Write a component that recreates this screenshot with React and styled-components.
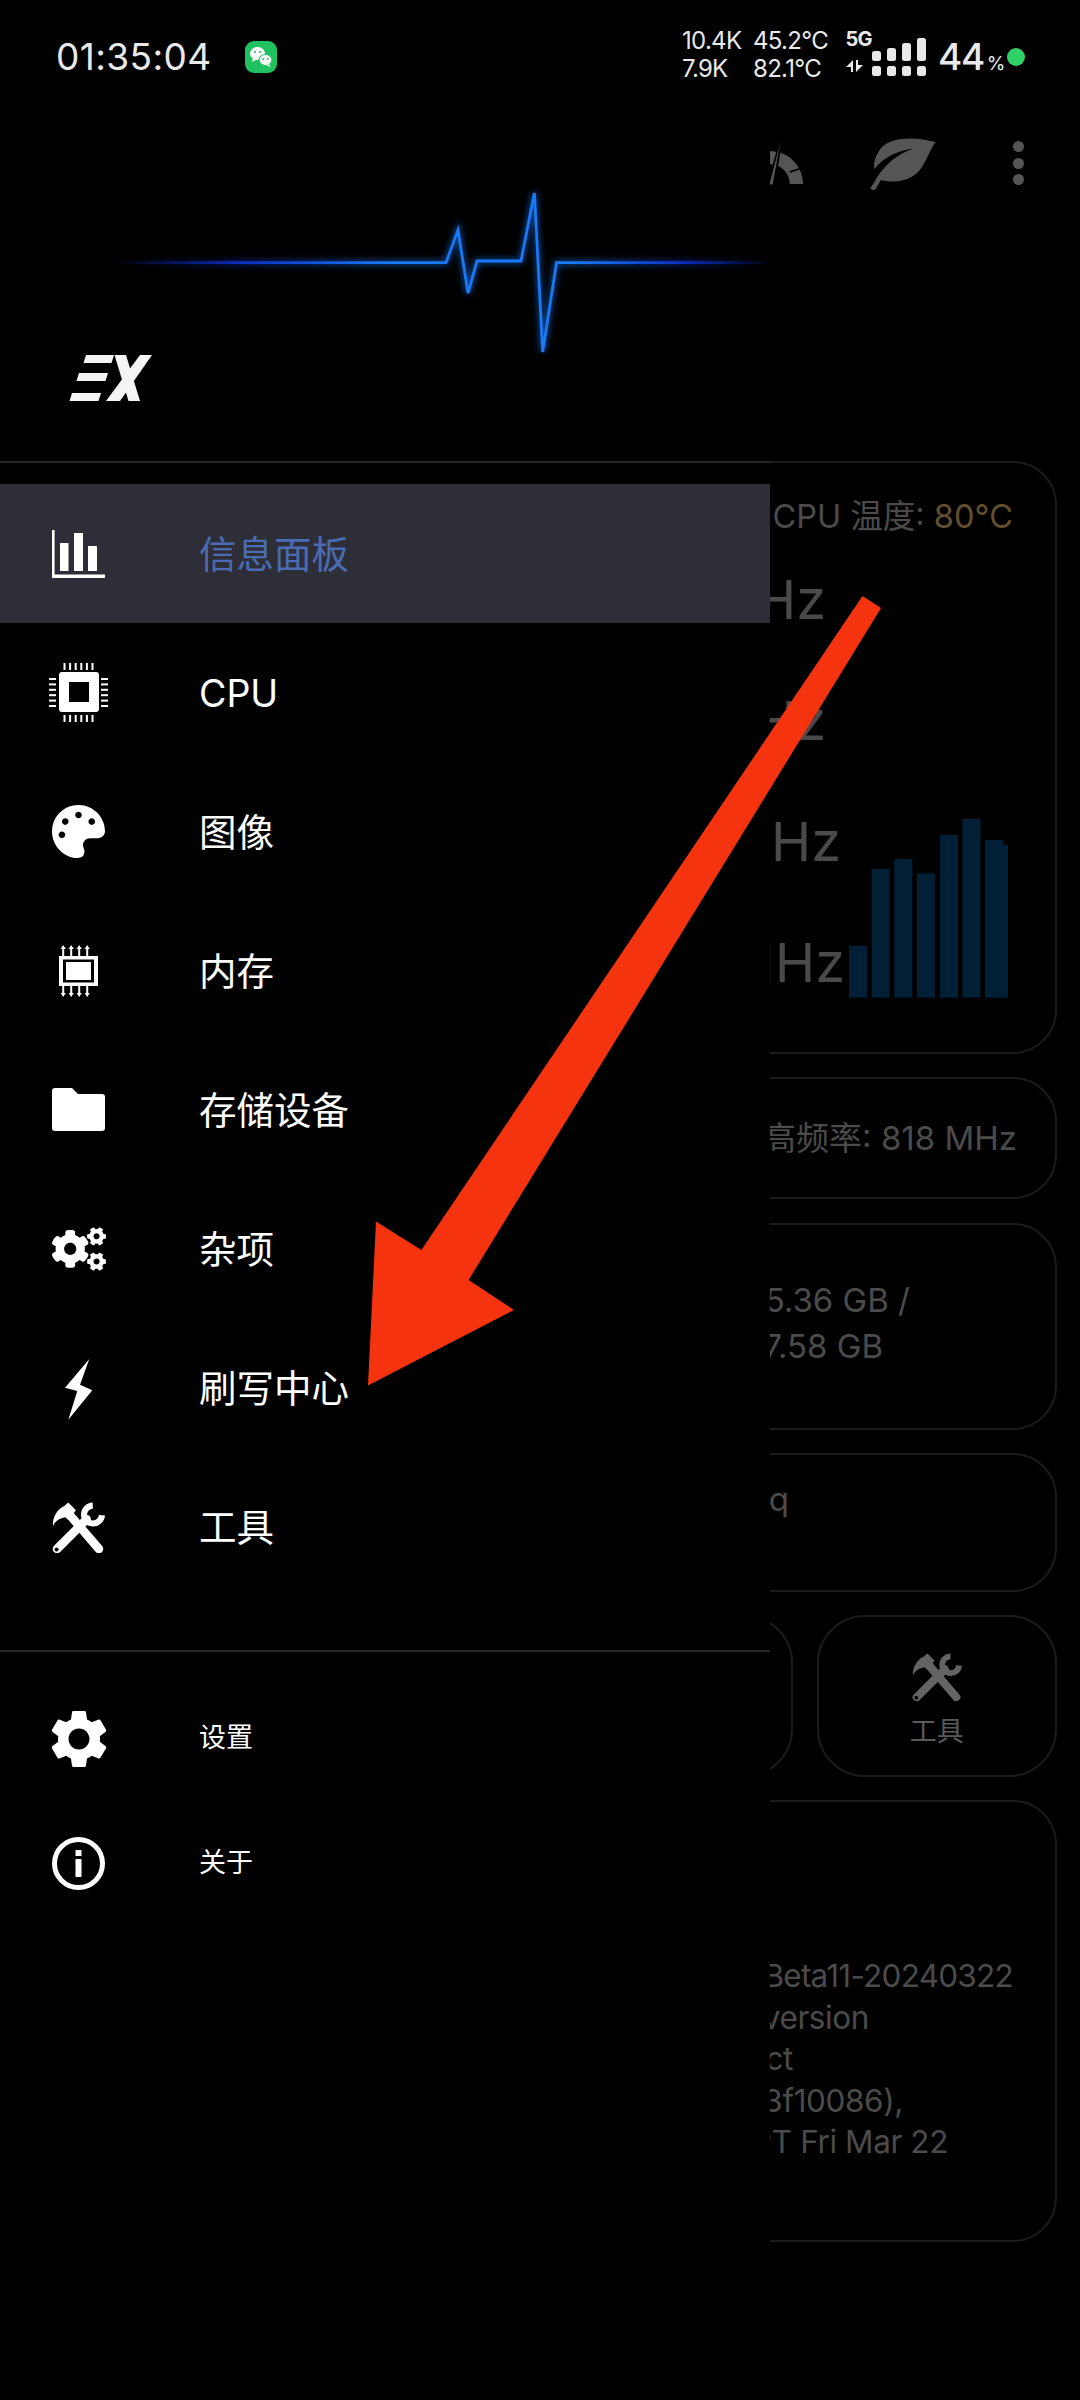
import React from "react";
import styled, { createGlobalStyle } from "styled-components";
import { FaPalette, FaCogs } from "react-icons/fa";

const Global = createGlobalStyle`
  html, body { margin: 0; padding: 0; background: #000; }
  #root { width: 1080px; height: 2400px; }
  * { box-sizing: border-box; }
`;

const FONT = `Inter, "Noto Sans CJK SC", sans-serif`;

const Screen = styled.div`
  position: relative;
  width: 1080px;
  height: 2400px;
  background: #000;
  overflow: hidden;
  font-family: ${FONT};
`;

/* ---------- status bar ---------- */
const StatusBar = styled.header`
  position: relative;
  z-index: 3;
  height: 114px;
  display: flex;
  align-items: flex-start;
  padding: 0 55px 0 56px;
  color: #e9e9e9;
`;
const Clock = styled.div`
  font-size: 37px;
  line-height: 44px;
  margin-top: 35px;
  letter-spacing: 0.4px;
  width: 189px;
`;
const AppBadge = styled.svg`
  width: 32px;
  height: 32px;
  margin-top: 41px;
  flex: none;
`;
const NetColumn = styled.div`
  width: ${(p) => p.$w}px;
  flex: none;
  margin-top: 27px;
  font-size: 24px;
  line-height: 27.5px;
  letter-spacing: -0.7px;
  white-space: nowrap;
  margin-left: ${(p) => p.$ml || 0}px;
`;
const RadioColumn = styled.div`
  width: 26px;
  flex: none;
  margin-top: 28px;
  display: flex;
  flex-direction: column;
  align-items: flex-end;
`;
const FiveG = styled.div`
  font-size: 20px;
  line-height: 22px;
  font-weight: 700;
  letter-spacing: -0.6px;
`;
const ActivityArrows = styled.svg`
  width: 17px;
  height: 12px;
  margin-top: 10px;
  margin-right: 9px;
`;
const SignalIcon = styled.svg`
  width: 54px;
  height: 40px;
  margin-top: 38px;
  flex: none;
`;
const Battery = styled.div`
  margin-left: 12px;
  margin-top: 34px;
  width: 69px;
  font-size: 37px;
  line-height: 46px;
  font-weight: 500;
  letter-spacing: -1.4px;
  white-space: nowrap;
`;
const Percent = styled.span`
  font-size: 19px;
  font-weight: 400;
  letter-spacing: 0;
  margin-left: 3px;
`;
const GreenDot = styled.span`
  width: 18px;
  height: 18px;
  border-radius: 50%;
  background: #2fd166;
  margin-top: 48px;
  flex: none;
`;

/* ---------- dimmed page behind the drawer ---------- */
const Page = styled.main`
  display: flex;
  flex-direction: column;
  color: #4b4b4b;
`;
const Toolbar = styled.div`
  height: 347px;
  display: flex;
  align-items: flex-start;
  padding: 23px 50px 0 737px;
`;
const Cards = styled.div`
  padding: 0 23px;
  display: flex;
  flex-direction: column;
  gap: 23.3px;
`;
const Card = styled.section`
  height: ${(p) => p.$h}px;
  border: 2px solid #1c1c1c;
  border-radius: 44px;
  padding-top: ${(p) => p.$pt || 0}px;
  padding-right: 38px;
`;
const Line = styled.div`
  font-size: ${(p) => p.$size || 33}px;
  line-height: ${(p) => p.$lh || 44}px;
  letter-spacing: ${(p) => p.$track || 0}px;
  text-align: right;
  white-space: nowrap;
  padding-right: ${(p) => p.$end}px;
`;
const CpuHead = styled.div`
  height: 75.5px;
  padding-top: 24px;
  font-size: 32.5px;
  line-height: 60px;
  text-align: right;
  white-space: nowrap;
  padding-right: 4px;
  color: #4b4b4b;
`;
const Warm = styled.span`
  color: #63502f;
`;
const CpuBody = styled.div`
  display: flex;
  align-items: flex-end;
  gap: 4px;
`;
const FreqColumn = styled.div`
  width: 820px;
  flex: none;
`;
const Freq = styled.div`
  height: 121px;
  font-size: 54px;
  line-height: 121px;
  text-align: right;
  white-space: nowrap;
  padding-right: ${(p) => p.$end}px;
  color: #4a4a4a;
`;
const LoadChart = styled.svg`
  width: 159px;
  height: 180px;
  margin-bottom: 25px;
  flex: none;
`;
const TileRow = styled.div`
  display: grid;
  grid-template-columns: repeat(4, 1fr);
  gap: 24px;
`;
const Tile = styled.div`
  height: 162px;
  border: 2px solid #1c1c1c;
  border-radius: 48px;
  display: flex;
  flex-direction: column;
  align-items: center;
  padding-top: 34px;
  color: #636363;
`;
const TileLabel = styled.div`
  font-size: 27px;
  line-height: 30px;
  margin-top: 16px;
  color: #5a5a5a;
`;
const KernelText = styled.div`
  padding-top: 153px;
  padding-right: 3px;
`;

/* ---------- drawer ---------- */
const Drawer = styled.aside`
  position: absolute;
  left: 0;
  top: 114px;
  bottom: 0;
  width: 770px;
  background: #000;
  z-index: 2;
  color: #fff;
`;
const Hero = styled.div`
  height: 349px;
  border-bottom: 2px solid #262626;
`;
const HeroWave = styled.svg`
  display: block;
  width: 770px;
  height: 240px;
`;
const LogoMark = styled.svg`
  display: block;
  width: 84px;
  height: 50px;
  margin-left: 69px;
  margin-top: -1px;
`;
const NavList = styled.nav`
  padding: ${(p) => p.$pad};
  border-bottom: ${(p) => (p.$rule ? "2px solid #262626" : "none")};
`;
const NavRow = styled.div`
  height: ${(p) => p.$h}px;
  display: flex;
  align-items: center;
  padding-left: 52px;
  background: ${(p) => (p.$active ? "#2e2e38" : "transparent")};
`;
const IconSlot = styled.div`
  width: 53px;
  height: 70px;
  flex: none;
  display: flex;
  align-items: center;
  justify-content: center;
  margin-right: 94px;
  svg { flex: none; }
`;
const NavLabel = styled.span`
  font-size: ${(p) => p.$size}px;
  line-height: 1.2;
  padding-top: ${(p) => p.$nudge || 0}px;
  color: ${(p) => (p.$active ? "#4a6cb2" : "#fff")};
`;
const CogsGlyph = styled(FaCogs)`
  width: 54px;
  height: 48px;
  color: #fff;
`;
const PaletteGlyph = styled(FaPalette)`
  width: 53px;
  height: 53px;
  color: #fff;
`;

/* ---------- annotation ---------- */
const Annotation = styled.svg`
  position: absolute;
  inset: 0;
  width: 1080px;
  height: 2400px;
  z-index: 4;
  pointer-events: none;
`;

/* ---------- drawings ---------- */
const BarsIcon = () => (
  <svg width="53" height="48" viewBox="0 0 53 48" fill="#fff">
    <path d="M0 0h2.6v44.6H53V48H0z" />
    <rect x="8" y="13" width="8.5" height="28" />
    <rect x="22" y="3" width="9" height="38" />
    <rect x="36" y="16" width="9" height="25" />
  </svg>
);

const range = (n) => Array.from({ length: n }, (_, i) => i);

const CpuIcon = () => (
  <svg width="60" height="60" viewBox="0 0 60 60" fill="#fff">
    <path fillRule="evenodd" d="M13 9h34a3 3 0 0 1 3 3v34a3 3 0 0 1-3 3H13a3 3 0 0 1-3-3V12a3 3 0 0 1 3-3zM20 19v20h20V19z" />
    {range(6).map((i) => (
      <g key={i}>
        <rect x={14.5 + i * 5.6} y="0" width="2" height="7" />
        <rect x={14.5 + i * 5.6} y="52" width="2" height="7" />
        <rect x="0" y={15 + i * 5.4} width="7" height="2" />
        <rect x="52" y={15 + i * 5.4} width="7" height="2" />
      </g>
    ))}
  </svg>
);

const MemoryIcon = () => (
  <svg width="53" height="54" viewBox="0 0 53 54" fill="#fff">
    <path fillRule="evenodd" d="M7 12h39v30H7zM11 15.5v23h31v-23z" />
    <rect x="14" y="18" width="25" height="18" />
    {range(4).map((i) => {
      const cx = 11.2 + i * 8;
      return (
        <g key={i}>
          <path d={`M${cx - 1} 12V5H${cx - 2.6}L${cx} 1L${cx + 2.6} 5H${cx + 1}V12z`} />
          <path d={`M${cx - 1} 42V49H${cx - 2.6}L${cx} 53L${cx + 2.6} 49H${cx + 1}V42z`} />
        </g>
      );
    })}
  </svg>
);

const FolderIcon = () => (
  <svg width="53" height="43" viewBox="0 0 53 43" fill="#fff">
    <path d="M3 0H20L26 6H50A3 3 0 0 1 53 9V40A3 3 0 0 1 50 43H3A3 3 0 0 1 0 40V3A3 3 0 0 1 3 0Z" />
  </svg>
);

const BoltIcon = () => (
  <svg width="53" height="66" viewBox="52 1353 53 66" fill="#fff">
    <path d="M89.3 1357L80 1382.7L92.3 1388.3L68.3 1417.7L77.3 1389L65 1385.7Z" />
  </svg>
);

const ToolsIcon = ({ size = 53, color = "#fff", hole = "#000" }) => (
  <svg width={size} height={size} viewBox="24 18 52 52" fill={color}>
    <g stroke={color} fill="none" strokeLinecap="round">
      <path d="M40 31L70 66" strokeWidth="8.5" />
      <path d="M29 66L58 37" strokeWidth="8.5" />
      <path d="M64 23.5A8.8 8.8 0 1 0 73 33" strokeWidth="6" strokeLinecap="butt" />
    </g>
    <path d="M40 20.5L47.5 28L40 37.5L37 35C31 36 27 39 25 43.5C24 36 29 27 36 24Z" />
    <circle cx="28.5" cy="66.5" r="2" fill={hole} />
  </svg>
);

const GearIcon = () => (
  <svg width="70" height="70" viewBox="0 0 24 24" fill="#fff">
    <path d="M19.14 12.94c.04-.3.06-.61.06-.94 0-.32-.02-.64-.07-.94l2.03-1.58a.49.49 0 0 0 .12-.61l-1.92-3.32a.488.488 0 0 0-.59-.22l-2.39.96c-.5-.38-1.03-.7-1.62-.94l-.36-2.54a.484.484 0 0 0-.48-.41h-3.84c-.24 0-.43.17-.47.41l-.36 2.54c-.59.24-1.13.57-1.62.94l-2.39-.96c-.22-.08-.47 0-.59.22L2.74 8.87c-.12.21-.08.47.12.61l2.03 1.58c-.05.3-.09.63-.09.94s.02.64.07.94l-2.03 1.58a.49.49 0 0 0-.12.61l1.92 3.32c.12.22.37.29.59.22l2.39-.96c.5.38 1.03.7 1.62.94l.36 2.54c.05.24.24.41.48.41h3.84c.24 0 .44-.17.47-.41l.36-2.54c.59-.24 1.13-.56 1.62-.94l2.39.96c.22.08.47 0 .59-.22l1.92-3.32c.12-.22.07-.47-.12-.61l-2.01-1.58zM12 15.6c-1.98 0-3.6-1.62-3.6-3.6s1.62-3.6 3.6-3.6 3.6 1.62 3.6 3.6-1.62 3.6-3.6 3.6z" />
  </svg>
);

const InfoIcon = () => (
  <svg width="53" height="53" viewBox="0 0 53 53">
    <circle cx="26.5" cy="26.5" r="24" fill="none" stroke="#fff" strokeWidth="5" />
    <rect x="23.5" y="13" width="6" height="6" fill="#fff" />
    <rect x="23.5" y="22" width="6" height="18" fill="#fff" />
  </svg>
);

const LeafIcon = () => (
  <svg width="73" height="60" viewBox="650 400 220 180" fill="#555">
    <path d="M857 424C800 408 720 405 690 445C672 470 670 490 672 505C700 470 740 450 790 443C745 458 700 490 670 548L660 562Q665 572 676 566L692 538C740 550 790 540 815 500C835 470 840 445 857 424Z" />
  </svg>
);

const GaugeSvg = styled.svg`
  width: 66px;
  height: 50px;
  flex: none;
`;
const GaugeIcon = () => (
  <GaugeSvg viewBox="260 415 200 150">
    <path d="M260 557A100 100 0 0 1 460 557H420A60 60 0 0 0 300 557Z" fill="#555" />
    <path d="M420 520L458 508" stroke="#000" strokeWidth="5" />
    <path d="M355 560L392 428L372 560Z" fill="#000" stroke="#000" strokeWidth="8" />
    <path d="M358 558L392 428L368 558Z" fill="#555" />
  </GaugeSvg>
);

const OverflowDots = styled.div`
  display: flex;
  flex-direction: column;
  gap: 5.5px;
  margin-top: 4px;
  margin-left: 73px;
`;
const OverflowDot = styled.span`
  width: 11px;
  height: 11px;
  border-radius: 50%;
  background: #555;
`;
const LeafSlot = styled.div`
  margin-left: 64px;
  margin-top: -3px;
`;

const bars = [
  [849, 946], [871.7, 868.6], [894.3, 859], [917, 873.5],
  [940, 835], [962.4, 819], [985, 840],
];

const navMain = [
  { icon: <BarsIcon />, label: "信息面板", active: true },
  { icon: <CpuIcon />, label: "CPU" },
  { icon: <PaletteGlyph />, label: "图像" },
  { icon: <MemoryIcon />, label: "内存" },
  { icon: <FolderIcon />, label: "存储设备" },
  { icon: <CogsGlyph />, label: "杂项" },
  { icon: <BoltIcon />, label: "刷写中心" },
  { icon: <ToolsIcon />, label: "工具" },
];
const navFoot = [
  { icon: <GearIcon />, label: "设置" },
  { icon: <InfoIcon />, label: "关于" },
];

export default function App() {
  return (
    <Screen>
      <Global />
      <StatusBar>
        <Clock>01:35:04</Clock>
        <AppBadge viewBox="0 0 32 32">
          <rect width="32" height="32" rx="9" fill="#1fc25f" />
          <ellipse cx="12.5" cy="12.5" rx="7.5" ry="6.5" fill="#fff" />
          <path d="M8 17l-1 4 4-2z" fill="#fff" />
          <ellipse cx="20.5" cy="19" rx="6.5" ry="5.5" fill="#fff" stroke="#1fc25f" strokeWidth="1.2" />
          <path d="M24 23l1.5 3-4-1.6z" fill="#fff" />
          <circle cx="10" cy="11" r="1.1" fill="#1fc25f" />
          <circle cx="15" cy="11" r="1.1" fill="#1fc25f" />
          <circle cx="18.3" cy="18" r="1" fill="#1fc25f" />
          <circle cx="22.7" cy="18" r="1" fill="#1fc25f" />
        </AppBadge>
        <NetColumn $w={71} $ml={405}>10.4K<br />7.9K</NetColumn>
        <NetColumn $w={93}>45.2°C<br />82.1°C</NetColumn>
        <RadioColumn>
          <FiveG>5G</FiveG>
          <ActivityArrows viewBox="0 0 17 12" fill="#e9e9e9">
            <path d="M7 0V12H5V7H0zM10 12V0H12V5H17z" />
          </ActivityArrows>
        </RadioColumn>
        <SignalIcon viewBox="0 0 54 40" fill="#e9e9e9">
          <rect x="0" y="13" width="9" height="10" rx="2.5" />
          <rect x="15" y="10" width="9" height="13" rx="2.5" />
          <rect x="30" y="5" width="9" height="18" rx="2.5" />
          <rect x="45" y="0" width="9" height="23" rx="2.5" />
          <rect x="0" y="28" width="9" height="10" rx="2.5" />
          <rect x="15" y="28" width="9" height="10" rx="2.5" />
          <rect x="30" y="28" width="9" height="10" rx="2.5" />
          <rect x="45" y="28" width="9" height="10" rx="2.5" />
        </SignalIcon>
        <Battery>44<Percent>%</Percent></Battery>
        <GreenDot />
      </StatusBar>

      <Page>
        <Toolbar>
          <GaugeIcon />
          <LeafSlot><LeafIcon /></LeafSlot>
          <OverflowDots>
            <OverflowDot />
            <OverflowDot />
            <OverflowDot />
          </OverflowDots>
        </Toolbar>
        <Cards>
          <Card $h={593}>
            <CpuHead>CPU 温度: <Warm>80°C</Warm></CpuHead>
            <CpuBody>
              <FreqColumn>
                <Freq $end={19}>1804 MHz</Freq>
                <Freq $end={19}>1804 MHz</Freq>
                <Freq $end={4}>2419 MHz</Freq>
                <Freq $end={0}>1094 MHz</Freq>
              </FreqColumn>
              <LoadChart viewBox="849 818 159 180" fill="#012036">
                {bars.map(([x, top]) => (
                  <rect key={x} x={x} y={top} width="18" height={997.6 - top} />
                ))}
                <rect x="994" y="845" width="14" height="152.6" />
              </LoadChart>
            </CpuBody>
          </Card>
          <Card $h={122} $pt={37}>
            <Line $end={-2}>最高频率: 818 MHz</Line>
          </Card>
          <Card $h={207} $pt={52}>
            <Line $end={107} $lh={46}>5.36 GB /</Line>
            <Line $end={134} $lh={46}>7.58 GB</Line>
          </Card>
          <Card $h={139} $pt={22}>
            <Line $end={228}>q</Line>
          </Card>
          <TileRow>
            <Tile />
            <Tile />
            <Tile />
            <Tile>
              <ToolsIcon size={50} color="#646464" />
              <TileLabel>工具</TileLabel>
            </Tile>
          </TileRow>
          <Card $h={442}>
            <KernelText>
              <Line $size={31.5} $lh={41.5} $track={-0.75} $end={1}>4.14-Beta11-20240322</Line>
              <Line $size={31.5} $lh={41.5} $track={-0.4} $end={145}>Linux version</Line>
              <Line $size={31.5} $lh={41.5} $track={-0.4} $end={221}>direct</Line>
              <Line $size={31.5} $lh={41.5} $track={-0.4} $end={111}>(3f10086),</Line>
              <Line $size={31.5} $lh={41.5} $track={-0.4} $end={66}>PREEMPT Fri Mar 22</Line>
            </KernelText>
          </Card>
        </Cards>
      </Page>

      <Drawer>
        <Hero>
          <HeroWave viewBox="0 114 770 240">
            <defs>
              <linearGradient id="ecgLine" gradientUnits="userSpaceOnUse" x1="110" y1="0" x2="775" y2="0">
                <stop offset="0" stopColor="#0a1f8a" stopOpacity="0" />
                <stop offset="0.2" stopColor="#0c2fc4" />
                <stop offset="0.42" stopColor="#1878f5" />
                <stop offset="0.7" stopColor="#1878f5" />
                <stop offset="0.86" stopColor="#0c2fc4" />
                <stop offset="1" stopColor="#0a1f8a" stopOpacity="0" />
              </linearGradient>
              <filter id="ecgGlow" x="-10%" y="-30%" width="120%" height="160%">
                <feGaussianBlur stdDeviation="3" />
              </filter>
            </defs>
            <g fill="none" strokeLinejoin="miter">
              <path d="M117 262.7H446L458 230L468 293L477 261H521L534.4 193L542.7 352L556.5 262.7H770" stroke="url(#ecgLine)" strokeWidth="5" opacity="0.6" filter="url(#ecgGlow)" />
              <path d="M117 262.7H446L458 230L468 293L477 261H521L534.4 193L542.7 352L556.5 262.7H770" stroke="url(#ecgLine)" strokeWidth="2.8" />
            </g>
          </HeroWave>
          <LogoMark viewBox="68 352 84 50">
            <path d="M85 354H113L110.5 362H82.5ZM78 372H107L104.5 380H75.5ZM71 392H100L97.5 400H68.5Z" fill="#f4f4f4" />
            <path d="M113.5 354H125L139 400H127.5Z" fill="#f4f4f4" />
            <path d="M139 354H151L119 400H105Z" fill="#f4f4f4" />
          </LogoMark>
        </Hero>
        <NavList $pad="21px 0 54px" $rule>
          {navMain.map((item) => (
            <NavRow key={item.label} $h={139} $active={item.active}>
              <IconSlot>{item.icon}</IconSlot>
              <NavLabel $size={37.5} $nudge={1} $active={item.active}>{item.label}</NavLabel>
            </NavRow>
          ))}
        </NavList>
        <NavList $pad="24px 0 0">
          {navFoot.map((item) => (
            <NavRow key={item.label} $h={125}>
              <IconSlot>{item.icon}</IconSlot>
              <NavLabel $size={27}>{item.label}</NavLabel>
            </NavRow>
          ))}
        </NavList>
      </Drawer>

      <Annotation viewBox="0 0 1080 2400">
        <polygon points="862.5,596 881,608 468.6,1280 514,1310 368,1385.6 376,1221.5 421.4,1250" fill="#f5340f" />
      </Annotation>
    </Screen>
  );
}
